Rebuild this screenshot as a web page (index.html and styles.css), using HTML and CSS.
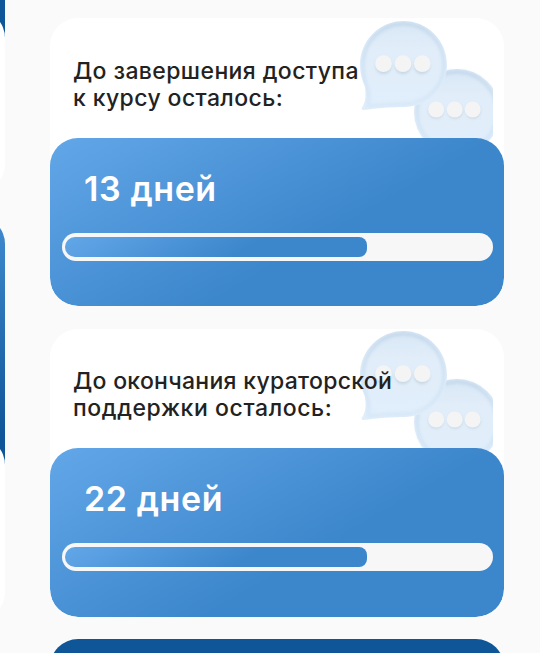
FILE: index.html
```html
<!DOCTYPE html>
<html lang="ru">
<head>
  <meta charset="UTF-8">
  <meta name="viewport" content="width=device-width, initial-scale=1.0">
  <title>Личный кабинет</title>
  <link rel="stylesheet" href="styles.css">
</head>
<body>
  <svg class="defs" width="0" height="0">
    <defs>
      <linearGradient id="bubbleFill" x1="0" y1="0" x2="0" y2="1">
        <stop offset="0" stop-color="#d8e7f5"/>
        <stop offset="0.3" stop-color="#e1edf9"/>
        <stop offset="1" stop-color="#e1eefb"/>
      </linearGradient>
      <linearGradient id="rim" x1="0" y1="0" x2="0" y2="1">
        <stop offset="0" stop-color="#b3cde5"/>
        <stop offset="0.5" stop-color="#c2d9ee"/>
        <stop offset="1" stop-color="#d0e3f5"/>
      </linearGradient>
      <filter id="soft" x="-20%" y="-20%" width="140%" height="140%">
        <feGaussianBlur stdDeviation="1.6"/>
      </filter>
      <filter id="edge" x="-10%" y="-10%" width="120%" height="120%">
        <feGaussianBlur stdDeviation="0.5"/>
      </filter>
      <clipPath id="clipFront">
        <path d="M43.5 1C67 1 87 20 87 45C87 68 69 86 46 87C32 87 17 88 4 90C1 90 1 88 3 86C6 80 6 74 5 67C2 60 0 53 0 45C0 20 20 1 43.5 1Z"/>
      </clipPath>
      <g id="bubbles">
        <circle cx="97" cy="92" r="43" fill="url(#bubbleFill)" filter="url(#edge)"/>
        <circle cx="97" cy="92" r="40" fill="none" stroke="url(#rim)" stroke-width="3" opacity="0.6" filter="url(#soft)"/>
        <g fill="#c6d5e3" filter="url(#soft)">
          <circle cx="76" cy="91" r="7.5"/><circle cx="95" cy="91" r="7.5"/><circle cx="113" cy="91" r="7.5"/>
        </g>
        <g fill="#f4f4f5">
          <circle cx="76.2" cy="89.5" r="8"/><circle cx="94.7" cy="89.5" r="8"/><circle cx="112.7" cy="89.5" r="8"/>
        </g>
        <path d="M43.5 1C67 1 87 20 87 45C87 68 69 86 46 87C32 87 17 88 4 90C1 90 1 88 3 86C6 80 6 74 5 67C2 60 0 53 0 45C0 20 20 1 43.5 1Z" fill="url(#bubbleFill)" filter="url(#edge)"/>
        <g clip-path="url(#clipFront)">
          <path d="M43.5 4C66 4 84 22 84 45C84 66 67 83 46 84C32 84 20 85 8 86C9 80 9 74 7 67C4 60 3 53 3 45C3 22 21 4 43.5 4Z" fill="none" stroke="url(#rim)" stroke-width="3" opacity="0.6" filter="url(#soft)"/>
        </g>
        <g fill="#c6d5e3" filter="url(#soft)">
          <circle cx="23.5" cy="46" r="8"/><circle cx="43" cy="46" r="8"/><circle cx="62" cy="46" r="8"/>
        </g>
        <g fill="#f4f4f5">
          <circle cx="23.5" cy="43.7" r="8.4"/><circle cx="43" cy="43.7" r="8.4"/><circle cx="62.3" cy="43.7" r="8.4"/>
        </g>
      </g>
    </defs>
  </svg>

  <div class="page">
    <div class="side">
      <div class="side-card first">
        <div class="side-body"></div>
      </div>
      <div class="side-card second">
        <div class="side-body"></div>
      </div>
    </div>

    <div class="main">
      <div class="card">
        <svg class="bubbles" viewBox="0 0 133 130"><use href="#bubbles"/></svg>
        <div class="card-title">
          <span class="t1">До завершения доступа</span><br>
          <span class="t2">к курсу осталось:</span>
        </div>
        <div class="card-body">
          <div class="days">13 дней</div>
          <div class="progress"><div class="progress-bar" style="width: 71%"></div></div>
        </div>
      </div>

      <div class="card support">
        <svg class="bubbles" viewBox="0 0 133 130"><use href="#bubbles"/></svg>
        <div class="card-title">
          <span class="t3">До окончания кураторской</span><br>
          <span class="t4">поддержки осталось:</span>
        </div>
        <div class="card-body">
          <div class="days">22 дней</div>
          <div class="progress"><div class="progress-bar" style="width: 71%"></div></div>
        </div>
      </div>

      <div class="card dark"></div>
    </div>
  </div>
</body>
</html>
```

FILE: styles.css
```css
* {
  box-sizing: border-box;
}
body {
  margin: 0;
  background: #fafafa;
  font-family: Inter, "Noto Sans", sans-serif;
}
.defs {
  display: block;
}
.page {
  display: flex;
  gap: 45px;
  height: 653px;
  overflow: hidden;
}
.side {
  width: 5px;
  overflow: hidden;
  display: flex;
  flex-direction: column;
  align-items: flex-end;
}
.side-card {
  width: 200px;
  flex-shrink: 0;
  border-radius: 28px;
}
.side-body {
  background: #fff;
  border-radius: 28px;
}
.first {
  height: 192px;
  padding-top: 10px;
  background: linear-gradient(#0e5698 60px, transparent 60px);
  border-top-right-radius: 0;
}
.first .side-body {
  height: 182px;
}
.second {
  margin-top: 24px;
  height: 404px;
  padding-top: 221px;
  background: linear-gradient(#3d87cc 15px, #0e5698 220px, #0e5698 260px, transparent 260px);
}
.second .side-body {
  height: 183px;
}
.main {
  width: 454px;
  padding-top: 18px;
  display: flex;
  flex-direction: column;
}
.card {
  position: relative;
  height: 288px;
  margin-bottom: 23px;
  flex-shrink: 0;
  background: #fff;
  border-radius: 28px;
  overflow: hidden;
}
.bubbles {
  position: absolute;
  top: 2px;
  right: 11px;
  width: 133px;
  height: 130px;
}
.card-title {
  position: relative;
  height: 120px;
  padding: 40px 0 0 23px;
  font-size: 23px;
  font-weight: 450;
  line-height: 27px;
  color: #222;
  white-space: nowrap;
}
.t1 {
  letter-spacing: 0.4px;
}
.t2 {
  letter-spacing: 0.4px;
}
.t3 {
  letter-spacing: 0.3px;
}
.t4 {
  letter-spacing: 0.6px;
}
.card-body {
  position: relative;
  height: 168px;
  padding: 28px 11px 0 12px;
  border-radius: 28px;
  background: linear-gradient(150deg, #62a7e8 0%, #3c86cb 60%);
}
.days {
  height: 67px;
  padding-left: 22px;
  font-size: 34px;
  font-weight: 600;
  line-height: 46px;
  letter-spacing: 0.6px;
  color: #fff;
}
.progress {
  height: 28px;
  padding: 4px 3px;
  border-radius: 14px;
  background: #f7f7f7;
}
.progress-bar {
  height: 20px;
  border-radius: 10px 8px 8px 10px;
  background: linear-gradient(150deg, #62a7e8 0%, #3c86cb 60%);
}
.support {
  margin-bottom: 22px;
}
.support .bubbles {
  top: 1px;
}
.support .card-title {
  height: 119px;
  padding-top: 39px;
}
.support .card-body {
  height: 169px;
}
.dark {
  height: auto;
  flex: 1;
  margin-bottom: 0;
  border-radius: 28px 28px 0 0;
  min-height: 28px;
  background: #0e5698;
}
```
